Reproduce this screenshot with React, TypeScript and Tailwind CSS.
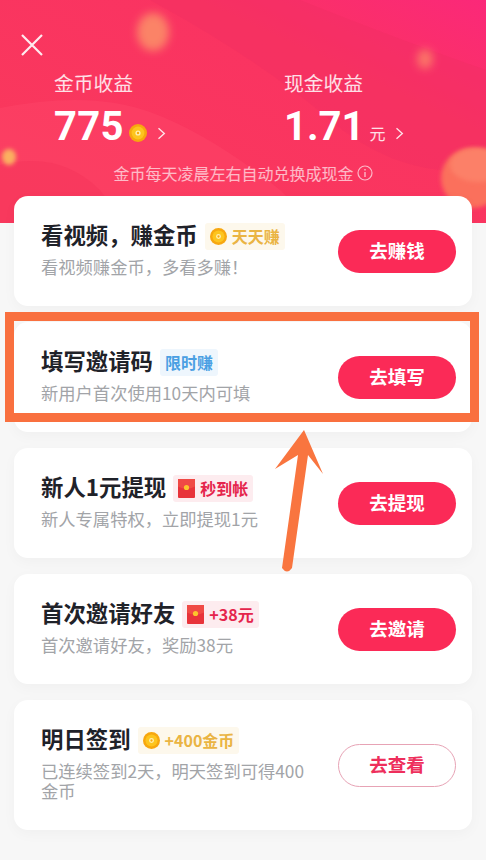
import { ReactNode } from 'react'

const FONT = { fontFamily: '"Noto Sans CJK SC", sans-serif' }

function Coin({ size = 18 }: { size?: number }) {
  return (
    <svg width={size} height={size} viewBox="0 0 18 18" className="shrink-0">
      <circle cx="9" cy="9" r="9" fill="#f7a70f" />
      <circle cx="9" cy="9" r="6.4" fill="#fdc51e" />
      <circle cx="9" cy="9" r="2.6" fill="#fff0b0" />
      <circle cx="9" cy="9" r="1.2" fill="#f9a90f" />
    </svg>
  )
}

function Envelope() {
  return (
    <svg width="17" height="19" viewBox="0 0 17 19" className="shrink-0">
      <rect width="17" height="19" rx="1" fill="#e8333a" />
      <path d="M0 0h17v7.5Q8.500 12 0 7.500Z" fill="#f04a45" />
      <circle cx="8.500" cy="8.500" r="2.600" fill="#fcc52c" />
    </svg>
  )
}

function Chevron() {
  return (
    <svg width="9" height="13" viewBox="0 0 9 13" className="shrink-0">
      <path d="M1.500 1.200 7.300 6.500 1.500 11.800" fill="none" stroke="#fff" strokeOpacity="0.85" strokeWidth="1.400" />
    </svg>
  )
}

type Task = {
  title: string
  sub: string
  button: string
  badge: ReactNode
  badgeClass: string
  outline?: boolean
}

const TASKS: Task[] = [
  {
    title: '看视频，赚金币',
    sub: '看视频赚金币，多看多赚！',
    button: '去赚钱',
    badge: (
      <>
        <Coin size={17} />
        <span>天天赚</span>
      </>
    ),
    badgeClass: 'bg-[#fdf8ec] text-[#eab443]',
  },
  {
    title: '填写邀请码',
    sub: '新用户首次使用10天内可填',
    button: '去填写',
    badge: <span>限时赚</span>,
    badgeClass: 'bg-[#eef6fd] text-[#4a9fe3]',
  },
  {
    title: '新人1元提现',
    sub: '新人专属特权，立即提现1元',
    button: '去提现',
    badge: (
      <>
        <Envelope />
        <span>秒到帐</span>
      </>
    ),
    badgeClass: 'bg-[#fdecef] text-[#e5254c]',
  },
  {
    title: '首次邀请好友',
    sub: '首次邀请好友，奖励38元',
    button: '去邀请',
    badge: (
      <>
        <Envelope />
        <span>+38元</span>
      </>
    ),
    badgeClass: 'bg-[#fdecef] text-[#e5254c]',
  },
  {
    title: '明日签到',
    sub: '已连续签到2天，明天签到可得400金币',
    button: '去查看',
    badge: (
      <>
        <Coin size={17} />
        <span>+400金币</span>
      </>
    ),
    badgeClass: 'bg-[#fdf8ec] text-[#eab443]',
    outline: true,
  },
]

function TaskCard({ task }: { task: Task }) {
  return (
    <div className="flex items-center rounded-[14px] bg-white pl-[27px] pr-4 shadow-[0_4px_14px_rgba(0,0,0,0.03)]">
      <div className="min-w-0 flex-1 pt-[26px] pb-[29px]">
        <div className="flex h-7 items-center gap-[7px]">
          <span className="-mt-1 text-[22.400px] leading-7 font-bold whitespace-nowrap text-[#1f2229]">{task.title}</span>
          <span className={`flex h-[27px] items-center gap-[5px] rounded-[3px] px-[5px] text-[16px] font-bold whitespace-nowrap ${task.badgeClass}`}>
            {task.badge}
          </span>
        </div>
        <div className="mt-[7px] w-[270px] text-[17.300px] leading-5 break-all text-[#a2a4a8]">{task.sub}</div>
      </div>
      <button
        className={
          task.outline
            ? 'h-[43px] w-[118px] shrink-0 rounded-full border border-[#e7a3b5] bg-white text-[18.500px] font-bold text-[#ee2f5c]'
            : 'h-[43px] w-[118px] shrink-0 rounded-full bg-[#fb2a57] text-[18.500px] font-bold text-white'
        }
      >
        {task.button}
      </button>
    </div>
  )
}

function HeaderDecor() {
  return (
    <svg className="absolute inset-0" width="486" height="223" viewBox="0 0 486 223">
      <defs>
        <filter id="blur4" x="-100%" y="-100%" width="300%" height="300%"><feGaussianBlur stdDeviation="4" /></filter>
        <filter id="blur2" x="-50%" y="-50%" width="200%" height="200%"><feGaussianBlur stdDeviation="2" /></filter>
      </defs>
      <path d="M150 0Q260 60 330 120T486 170V70Q400 40 300 0Z" fill="#ef2e62" fillOpacity="0.35" />
      <path d="M0 108Q90 90 150 112T280 190Q300 210 320 223H0Z" fill="#ff4a6c" fillOpacity="0.35" />
      <path d="M0 165Q60 150 100 190L125 223H0Z" fill="#f5335a" fillOpacity="0.5" />
      <ellipse cx="153" cy="32" rx="16" ry="19" fill="#fc9068" fillOpacity="0.85" filter="url(#blur4)" />
      <ellipse cx="425" cy="59" rx="8" ry="10" fill="#fc8468" fillOpacity="0.8" filter="url(#blur4)" />
      <ellipse cx="9" cy="157" rx="7" ry="8" fill="#fbb560" fillOpacity="0.95" filter="url(#blur2)" />
      <ellipse cx="472" cy="178" rx="31" ry="30" fill="#fb6f5c" filter="url(#blur2)" />
      <ellipse cx="478" cy="165" rx="28" ry="17" fill="#fc8068" filter="url(#blur2)" />
    </svg>
  )
}

export default function App() {
  return (
    <div className="relative h-[860px] w-[486px] overflow-hidden bg-[#f7f7f7]" style={FONT}>
      <div className="relative h-[223px] bg-[linear-gradient(25deg,#f93a5a_0%,#fa3362_70%,#fb2879_100%)] text-white">
        <HeaderDecor />
        <div className="relative pt-[33px] pl-[20px]">
          <svg width="24" height="24" viewBox="0 0 24 24">
            <path d="M2 2 22 22M22 2 2 22" stroke="#fff" strokeOpacity="0.9" strokeWidth="2.200" fill="none" />
          </svg>
        </div>
        <div className="relative mt-[12px] grid grid-cols-[230px_1fr] pl-[54px]">
          <div>
            <div className="text-[19.800px] leading-7 text-white/85">金币收益</div>
            <div className="mt-[6px] flex h-12 items-center">
              <span className="text-[40px] leading-none font-bold tracking-[0.3px]" style={{ fontFamily: 'Roboto, sans-serif' }}>775</span>
              <span className="mt-3 ml-[5px]"><Coin size={18} /></span>
              <span className="mt-3 ml-[10px]"><Chevron /></span>
            </div>
          </div>
          <div>
            <div className="text-[19.800px] leading-7 text-white/85">现金收益</div>
            <div className="mt-[6px] flex h-12 items-center">
              <span className="text-[40px] leading-none font-bold" style={{ fontFamily: 'Roboto, sans-serif' }}>1.71</span>
              <span className="mt-3 ml-[5px] text-[16px] text-white/85">元</span>
              <span className="mt-3 ml-[10px]"><Chevron /></span>
            </div>
          </div>
        </div>
        <div className="relative mt-[10px] flex items-center justify-center gap-[3px] text-[16px] leading-6 text-white/65">
          <span>金币每天凌晨左右自动兑换成现金</span>
          <svg width="16" height="16" viewBox="0 0 16 16">
            <circle cx="8" cy="8" r="7" fill="none" stroke="#fff" strokeOpacity="0.65" strokeWidth="1.200" />
            <path d="M8 7v5M8 4v1.500" stroke="#fff" strokeOpacity="0.65" strokeWidth="1.400" />
          </svg>
        </div>
      </div>

      <div className="relative -mt-[27px] flex flex-col gap-4 px-[14px]">
        {TASKS.map(task => (
          <TaskCard key={task.title} task={task} />
        ))}
      </div>

      {/* annotation drawn over the screenshot */}
      <div className="pointer-events-none absolute top-[312px] left-[5px] h-[110px] w-[474px] border-[9px] border-[#f9703f]" />
      <svg className="pointer-events-none absolute inset-0" width="486" height="860" viewBox="0 0 486 860">
        <path
          d="M304 430 323 474 308 455 292 568Q287 575 282 568L298 455 275 469Z"
          fill="#f9753f"
        />
      </svg>
    </div>
  )
}
